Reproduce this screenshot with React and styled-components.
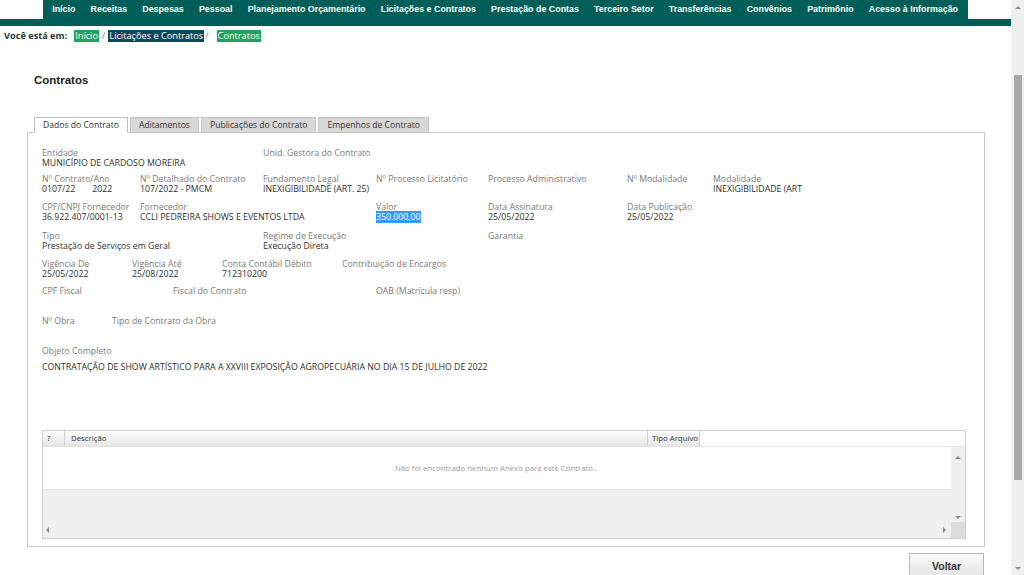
import styled, { createGlobalStyle } from 'styled-components';

const GlobalStyle = createGlobalStyle`
  html, body { margin: 0; padding: 0; background: #fff; }
  body { font-family: "Open Sans", "Noto Sans", sans-serif; color: #333; }
  * { box-sizing: border-box; }
`;

const menu = [
  'Início',
  'Receitas',
  'Despesas',
  'Pessoal',
  'Planejamento Orçamentário',
  'Licitações e Contratos',
  'Prestação de Contas',
  'Terceiro Setor',
  'Transferências',
  'Convênios',
  'Patrimônio',
  'Acesso à Informação',
];

const rows = [
  [
    { w: 221, label: 'Entidade', value: 'MUNICÍPIO DE CARDOSO MOREIRA' },
    { label: 'Unid. Gestora do Contrato' },
  ],
  [
    { w: 98, label: 'Nº Contrato/Ano', value: '0107/22', extra: '2022' },
    { w: 123, label: 'Nº Detalhado do Contrato', value: '107/2022 - PMCM' },
    { w: 113, label: 'Fundamento Legal', value: 'INEXIGIBILIDADE (ART. 25)' },
    { w: 112, label: 'Nº Processo Licitatório' },
    { w: 139, label: 'Processo Administrativo' },
    { w: 86, label: 'Nº Modalidade' },
    { label: 'Modalidade', value: 'INEXIGIBILIDADE (ART' },
  ],
  [
    { w: 98, label: 'CPF/CNPJ Fornecedor', value: '36.922.407/0001-13' },
    { w: 236, label: 'Fornecedor', value: 'CCLI PEDREIRA SHOWS E EVENTOS LTDA' },
    { w: 112, label: 'Valor', value: '350.000,00', selected: true },
    { w: 139, label: 'Data Assinatura', value: '25/05/2022' },
    { label: 'Data Publicação', value: '25/05/2022' },
  ],
  [
    { w: 221, label: 'Tipo', value: 'Prestação de Serviços em Geral' },
    { w: 225, label: 'Regime de Execução', value: 'Execução Direta' },
    { label: 'Garantia' },
  ],
  [
    { w: 90, label: 'Vigência De', value: '25/05/2022' },
    { w: 90, label: 'Vigência Até', value: '25/08/2022' },
    { w: 120, label: 'Conta Contábil Débito', value: '712310200' },
    { label: 'Contribuição de Encargos' },
  ],
  [
    { w: 131, label: 'CPF Fiscal' },
    { w: 203, label: 'Fiscal do Contrato' },
    { label: 'OAB (Matrícula resp)' },
  ],
  [
    { w: 70, label: 'Nº Obra' },
    { label: 'Tipo de Contrato da Obra' },
  ],
];

const rowHeights = [26, 28, 29, 28, 27, 30, 30];

const tabs = ['Dados do Contrato', 'Aditamentos', 'Publicações do Contrato', 'Empenhos de Contrato'];

const Arrow = ({ dir }) => {
  const pts = {
    up: '0,4 3,1 6,4',
    down: '0,1 3,4 6,1',
    left: '4,0 1,3 4,6',
    right: '1,0 4,3 1,6',
  }[dir];
  const vertical = dir === 'up' || dir === 'down';
  return (
    <svg width={vertical ? 6 : 5} height={vertical ? 5 : 6} viewBox={vertical ? '0 0 6 5' : '0 0 5 6'}>
      <polygon points={pts} fill="#8a8a8a" />
    </svg>
  );
};

export default function App() {
  return (
    <>
      <GlobalStyle />
      <Window>
        <Page>
          <Header>
            <Menu>
              {menu.map((item) => (
                <MenuItem key={item}>{item}</MenuItem>
              ))}
            </Menu>
          </Header>

          <Breadcrumb>
            <Here>Você está em:</Here>
            <Crumb $tone="green">Início</Crumb>
            <Sep $l={3} $r={3}>/</Sep>
            <Crumb $tone="dark">Licitações e Contratos</Crumb>
            <Sep $l={1} $r={8}>/</Sep>
            <Crumb $tone="green">Contratos</Crumb>
          </Breadcrumb>

          <Title>Contratos</Title>

          <Tabs>
            {tabs.map((t, i) => (
              <Tab key={t} $active={i === 0}>
                {t}
              </Tab>
            ))}
          </Tabs>

          <Panel>
            {rows.map((row, ri) => (
              <Row key={ri} $h={rowHeights[ri]}>
                {row.map((f) => (
                  <Field key={f.label} $w={f.w}>
                    <Label>{f.label}</Label>
                    {f.value && (
                      <Value>
                        {f.selected ? <Selected>{f.value}</Selected> : f.value}
                        {f.extra && <Extra>{f.extra}</Extra>}
                      </Value>
                    )}
                  </Field>
                ))}
              </Row>
            ))}

            <ObjectBlock>
              <Label>Objeto Completo</Label>
              <ObjectText>
                CONTRATAÇÃO DE SHOW ARTÍSTICO PARA A XXVIII EXPOSIÇÃO AGROPECUÁRIA NO DIA 15 DE JULHO DE 2022
              </ObjectText>
            </ObjectBlock>

            <Grid>
              <GridHead>
                <HeadCell $w={22}>?</HeadCell>
                <HeadCell $w={583}>Descrição</HeadCell>
                <HeadCell $w={52}>Tipo Arquivo</HeadCell>
              </GridHead>
              <GridBody>
                <GridContent>
                  <EmptyRow>Não foi encontrado nenhum Anexo para este Contrato...</EmptyRow>
                </GridContent>
                <VScroll>
                  <Arrow dir="up" />
                  <Arrow dir="down" />
                </VScroll>
                <HScroll>
                  <Arrow dir="left" />
                  <Arrow dir="right" />
                </HScroll>
                <Corner />
              </GridBody>
            </Grid>
          </Panel>

          <Actions>
            <Button>Voltar</Button>
          </Actions>
        </Page>

        <Scrollbar>
          <ScrollArrow>
            <Arrow dir="up" />
          </ScrollArrow>
          <Track>
            <Thumb />
          </Track>
          <ScrollArrow>
            <Arrow dir="down" />
          </ScrollArrow>
        </Scrollbar>
      </Window>
    </>
  );
}

const Window = styled.div`
  display: flex;
  width: 1024px;
  height: 575px;
  overflow: hidden;
`;

const Page = styled.div`
  flex: 1;
  min-width: 0;
`;

const Header = styled.div`
  border-bottom: 7px solid #005e58;
  padding-left: 43px;
`;

const Menu = styled.ul`
  display: flex;
  margin: 0;
  padding: 0 0 0 1.6px;
  width: 925px;
  height: 19px;
  list-style: none;
  background: #005e58;
`;

const MenuItem = styled.li`
  padding: 0 7.6px;
  line-height: 19px;
  font-family: "Liberation Sans", Arial, sans-serif;
  font-size: 8.9px;
  font-weight: bold;
  color: #fff;
  white-space: nowrap;
`;

const Breadcrumb = styled.div`
  display: flex;
  align-items: center;
  padding: 3px 0 0 4px;
  height: 16px;
  font-size: 9.2px;
`;

const Here = styled.span`
  font-weight: bold;
  color: #1d3a3a;
  margin-right: 7px;
`;

const Crumb = styled.span`
  padding: 0 1px;
  line-height: 12px;
  color: #fff;
  background: ${(p) => (p.$tone === 'green' ? '#1ea35d' : '#0b4a5c')};
`;

const Sep = styled.span`
  color: #888;
  margin: 0 ${(p) => p.$r}px 0 ${(p) => p.$l}px;
`;

const Title = styled.h1`
  margin: 32px 0 0 34px;
  font-family: "Liberation Sans", Arial, sans-serif;
  font-size: 11.5px;
  font-weight: bold;
  color: #222;
`;

const Tabs = styled.div`
  display: flex;
  gap: 2px;
  margin: 31px 0 0 34px;
  position: relative;
  z-index: 1;
`;

const Tab = styled.div`
  height: 16px;
  padding: 0 8px;
  line-height: 15px;
  font-size: 8.6px;
  color: #333;
  border: 1px solid ${(p) => (p.$active ? '#bdbdbd' : '#c4c4c4')};
  border-bottom-color: ${(p) => (p.$active ? '#fff' : '#c4c4c4')};
  background: ${(p) => (p.$active ? '#fff' : '#d8d8d8')};
`;

const Panel = styled.div`
  margin: -1px 26px 0 27px;
  padding: 16px 18px 8px 14px;
  border: 1px solid #c8c8c8;
  height: 415px;
`;

const Row = styled.div`
  display: flex;
  height: ${(p) => p.$h}px;
`;

const Field = styled.div`
  flex: ${(p) => (p.$w ? `0 0 ${p.$w}px` : '1')};
  white-space: nowrap;
`;

const Label = styled.div`
  font-size: 8.75px;
  line-height: 9px;
  color: #7a7a7a;
`;

const Value = styled.div`
  font-size: 8.75px;
  line-height: 10px;
  color: #2f2f2f;
`;

const Extra = styled.span`
  margin-left: 17px;
`;

const Selected = styled.span`
  background: #3399ff;
  color: #fff;
`;

const ObjectBlock = styled.div``;

const ObjectText = styled.div`
  margin-top: 5px;
  font-size: 8.75px;
  color: #2f2f2f;
`;

const Grid = styled.div`
  margin-top: 57px;
  border: 1px solid #cfcfcf;
  height: 109px;
  display: flex;
  flex-direction: column;
`;

const GridHead = styled.div`
  display: flex;
  height: 16px;
  background: #fff;
  border-bottom: 1px solid #e2e2e2;
`;

const HeadCell = styled.div`
  flex: 0 0 ${(p) => p.$w}px;
  padding-left: ${(p) => (p.$w < 60 ? 4 : 6)}px;
  font-size: 7.8px;
  line-height: 15px;
  white-space: nowrap;
  overflow: hidden;
  color: #333;
  background: linear-gradient(#fdfdfd, #e6e6e6);
  border-right: 1px solid #d0d0d0;
`;

const GridBody = styled.div`
  flex: 1;
  display: grid;
  grid-template-columns: 1fr 14px;
  grid-template-rows: 1fr 16px;
  background: #f0f0f0;
`;

const GridContent = styled.div``;

const EmptyRow = styled.div`
  height: 43px;
  background: #fff;
  border-bottom: 1px solid #e0e0e0;
  text-align: center;
  font-size: 7.8px;
  line-height: 43px;
  color: #9a9a9a;
`;

const VScroll = styled.div`
  display: flex;
  flex-direction: column;
  align-items: center;
  justify-content: space-between;
  padding: 8px 0 2px;
`;

const HScroll = styled.div`
  display: flex;
  align-items: center;
  justify-content: space-between;
  padding: 0 4px 0 2px;
`;

const Corner = styled.div`
  background: #dcdcdc;
`;

const Actions = styled.div`
  display: flex;
  justify-content: flex-end;
  padding: 6px 27px 0 0;
`;

const Button = styled.button`
  width: 75px;
  height: 26px;
  border: 1px solid #b8b8b8;
  background: linear-gradient(#fafafa, #e4e4e4);
  font-family: "Liberation Sans", Arial, sans-serif;
  font-size: 10.5px;
  font-weight: bold;
  color: #333;
`;

const Scrollbar = styled.div`
  flex: 0 0 13px;
  display: flex;
  flex-direction: column;
  background: #f0f0f0;
`;

const ScrollArrow = styled.div`
  height: 14px;
  display: flex;
  align-items: center;
  justify-content: center;
`;

const Track = styled.div`
  flex: 1;
  padding-top: 61px;
`;

const Thumb = styled.div`
  margin: 0 2px 0 3px;
  height: 405px;
  background: #a8a8a8;
`;
